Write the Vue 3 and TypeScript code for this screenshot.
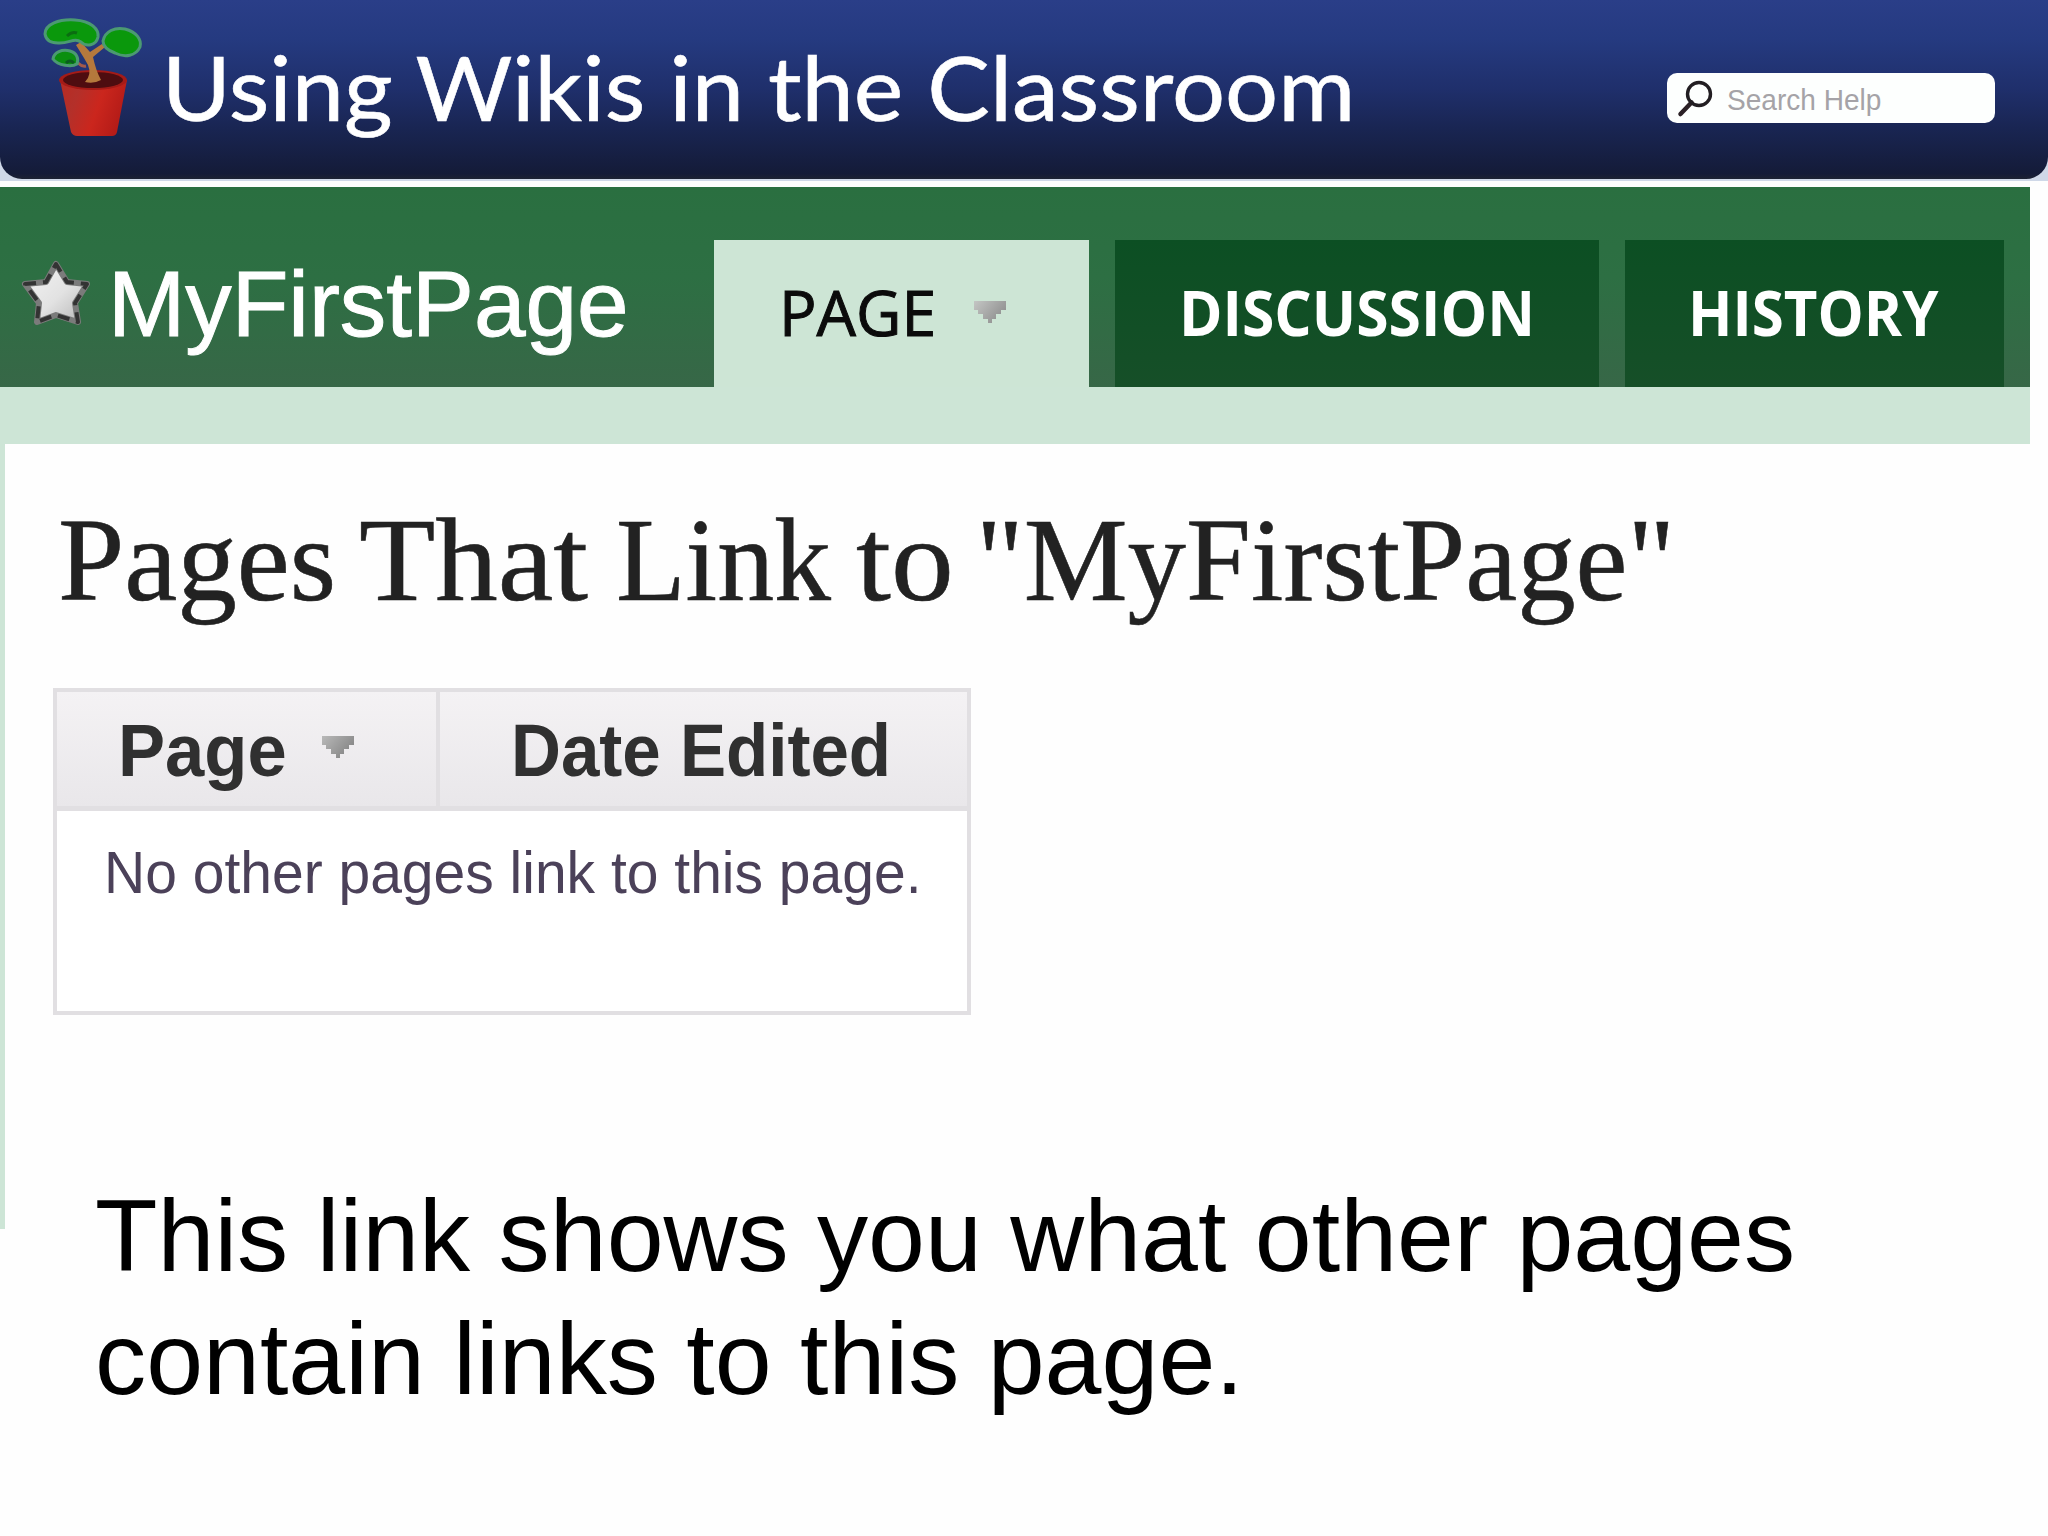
<script setup lang="ts">
import { ref } from "vue";

type Tab = {
  label: string;
  kind: string;
  hasMenu: boolean;
};

type TitleWord = {
  text: string;
  width: number;
  stretch: number;
};

const pageName = "MyFirstPage";
const activeTab = ref("PAGE");

const tabs: Tab[] = [
  { label: "PAGE", kind: "page", hasMenu: true },
  { label: "DISCUSSION", kind: "discussion", hasMenu: false },
  { label: "HISTORY", kind: "history", hasMenu: false },
];

const titleWords: TitleWord[] = [
  { text: "Pages", width: 301, stretch: 0.997 },
  { text: "That", width: 257, stretch: 1.045 },
  { text: "Link", width: 240, stretch: 0.952 },
  { text: "to", width: 120, stretch: 1.05 },
  { text: `"${pageName}"`, width: 700, stretch: 0.977 },
];

const captionLines = [
  "This link shows you what other pages",
  "contain links to this page.",
];
</script>

<template>
  <div class="slide">
    <div class="banner-wrap">
      <header class="banner">
        <svg class="plant" viewBox="0 0 110 130" aria-hidden="true">
          <defs>
            <linearGradient id="pot" x1="0" x2="1" y1="0" y2="0.3">
              <stop offset="0" stop-color="#b92a22" />
              <stop offset="0.3" stop-color="#b3302a" />
              <stop offset="0.65" stop-color="#cb261d" />
              <stop offset="1" stop-color="#b51c18" />
            </linearGradient>
          </defs>
          <path d="M19 71 L30 123 Q32 127 36 127 L71 127 Q75 127 76 123 L86 71 Z" fill="url(#pot)" />
          <ellipse cx="52" cy="71" rx="34" ry="10" fill="#a51b17" />
          <ellipse cx="52" cy="71" rx="30" ry="8" fill="#4e0d10" />
          <path d="M44 73 Q51 66 47 56 L43 49 L35 36 L40 33 L49 43 L61 35 L64 38 L52 48 Q55 62 60 71 Q53 75 44 73 Z" fill="#b5793c" />
          <path d="M45 57 Q41 58 37 54" fill="none" stroke="#a45a4a" stroke-width="3" />
          <path d="M4 25 C4 15 18 10 34 11 C50 12 58 20 57 28 C55 37 45 38 40 33 C33 28 28 35 17 34 C9 34 5 31 4 25 Z" fill="#0a980c" stroke="#4b9a72" stroke-width="3" />
          <path d="M62 32 C64 22 74 18 84 20 C95 23 101 30 99 38 C95 47 84 49 74 44 C66 41 62 37 62 32 Z" fill="#0a980c" stroke="#4b9a72" stroke-width="3" />
          <path d="M12 50 C13 43 21 40 29 42 C36 44 38 50 36 55 C31 58 17 57 12 50 Z" fill="#0a8f10" stroke="#4b9a72" stroke-width="3" />
          <path d="M26 27 Q31 22 36 24" fill="none" stroke="#0b6d12" stroke-width="3" />
          <path d="M25 54 Q29 50 33 54" fill="none" stroke="#0b5d20" stroke-width="3" />
        </svg>
        <h1 class="banner-title"><span>Using Wikis in the Classroom</span></h1>
        <div class="search">
          <svg class="search-icon" viewBox="0 0 38 40" aria-hidden="true">
            <path d="M15.500 23.500 L4.500 35" stroke="#2b2126" stroke-width="4.500" stroke-linecap="round" />
            <circle cx="23" cy="15" r="11.500" fill="none" stroke="#221e22" stroke-width="3.400" />
          </svg>
          <span class="search-text">Search Help</span>
        </div>
      </header>
    </div>

    <section class="wiki">
      <div class="wiki-bar">
        <svg class="star" viewBox="0 0 72 68" aria-hidden="true">
          <defs>
            <linearGradient id="star-fill" x1="0" x2="1" y1="0" y2="1">
              <stop offset="0" stop-color="#f4f4f4" />
              <stop offset="0.55" stop-color="#e2e2e2" />
              <stop offset="1" stop-color="#b5b5b5" />
            </linearGradient>
          </defs>
          <path
            d="M35 4 L46 22 L66 24 L54 43 L57 62 L35 55 L16 62 L18 43 L4 24 L25 22 Z"
            fill="url(#star-fill)"
            stroke="#7b7b7b"
            stroke-width="6"
            stroke-linejoin="round"
          />
          <path
            d="M35 4 L46 22 L66 24 L54 43 L57 62 L35 55 L16 62 L18 43 L4 24 L25 22 Z"
            fill="none"
            stroke="#333"
            stroke-width="4"
            stroke-dasharray="12 7"
            stroke-dashoffset="3"
            stroke-linejoin="round"
          />
        </svg>
        <h2 class="wiki-name"><span>{{ pageName }}</span></h2>
        <nav class="tabs">
          <a
            v-for="tab in tabs"
            :key="tab.label"
            class="tab"
            :class="[tab.kind, { active: tab.label === activeTab }]"
            v-on:click="activeTab = tab.label"
          >
            <span class="tab-label">{{ tab.label }}</span>
            <svg v-if="tab.hasMenu" class="arrow" viewBox="0 0 32 22" aria-hidden="true">
              <defs>
                <linearGradient id="tab-arrow" x1="0" x2="1" y1="0" y2="0.6">
                  <stop offset="0" stop-color="#c4c6c4" />
                  <stop offset="1" stop-color="#8f8f8f" />
                </linearGradient>
              </defs>
              <path d="M0 0H32V9H27V13H22V18H18V22H14V18H9V13H4V9H0Z" fill="url(#tab-arrow)" />
            </svg>
          </a>
        </nav>
      </div>
      <div class="wiki-strip"></div>

      <div class="content">
        <h3 class="content-title">
          <span
            v-for="word in titleWords"
            :key="word.text"
            :style="{ width: `${word.width}px`, transform: `scaleX(${word.stretch})` }"
            >{{ word.text }}</span
          >
        </h3>
        <div class="table">
          <div class="table-head">
            <div class="cell cell-page">
              <span class="cell-page-text">Page</span>
              <svg class="arrow" viewBox="0 0 32 22" aria-hidden="true">
                <defs>
                  <linearGradient id="head-arrow" x1="0" x2="1" y1="0" y2="0.6">
                    <stop offset="0" stop-color="#b9b9b9" />
                    <stop offset="1" stop-color="#858585" />
                  </linearGradient>
                </defs>
                <path d="M0 0H32V9H27V13H22V18H18V22H14V18H9V13H4V9H0Z" fill="url(#head-arrow)" />
              </svg>
            </div>
            <div class="cell cell-date"><span>Date Edited</span></div>
          </div>
          <div class="table-body"><span>No other pages link to this page.</span></div>
        </div>
      </div>
    </section>

    <p class="caption">
      <span v-for="line in captionLines" :key="line">{{ line }}</span>
    </p>
  </div>
</template>

<style>
body {
  margin: 0;
  background: #fefefe;
}
</style>

<style scoped>
.slide {
  width: 2048px;
  height: 1536px;
  overflow: hidden;
  background: #fefefe;
  font-family: "Liberation Sans", Arial, sans-serif;
}

h1,
h2,
h3,
p {
  margin: 0;
  font-weight: 400;
}

span {
  display: inline-block;
  transform-origin: 0 50%;
  white-space: nowrap;
}

.banner-wrap {
  height: 181px;
  margin-bottom: 6px;
  background: #cfd8e8;
}

.banner {
  display: flex;
  box-sizing: border-box;
  height: 179px;
  padding-left: 41px;
  border-radius: 0 0 22px 22px;
  background: linear-gradient(#2a3e88 0%, #253a80 22%, #1f2f6b 50%, #192552 72%, #141b38 97%, #1c2233 100%);
}

.plant {
  width: 110px;
  height: 130px;
  margin-top: 9px;
}

.banner-title {
  width: 1516px;
  padding: 36px 0 0 11px;
  box-sizing: border-box;
  color: #fff;
  font-family: Lato, "Open Sans", sans-serif;
  font-size: 90px;
  line-height: 101px;
  -webkit-text-stroke: 0.6px #fff;
}

.banner-title span {
  transform: scaleX(1.041);
}

.search {
  display: flex;
  box-sizing: border-box;
  width: 328px;
  height: 50px;
  margin-top: 73px;
  padding-left: 9px;
  border-radius: 10px;
  background: #fdfffe;
}

.search-icon {
  flex: none;
  width: 38px;
  height: 40px;
  margin-top: 6px;
}

.search-text {
  margin-left: 13px;
  color: #a5a3a7;
  font-size: 30px;
  line-height: 54px;
  transform: scaleX(0.935);
}

.wiki {
  width: 2030px;
}

.wiki-bar {
  display: flex;
  height: 200px;
  background: linear-gradient(#2a6f40 0%, #2d6f43 45%, #376747 100%);
}

.star {
  flex: none;
  width: 72px;
  height: 68px;
  margin: 73px 0 0 21px;
}

.wiki-name {
  box-sizing: border-box;
  width: 621px;
  padding: 57px 0 0 15px;
  color: #fff;
  font-size: 92.500px;
  line-height: 120px;
  -webkit-text-stroke: 1px #fff;
}

.wiki-name span {
  transform: scaleX(1.003);
}

.tabs {
  display: flex;
  gap: 26px;
  padding-top: 53px;
}

.tab {
  display: flex;
  box-sizing: border-box;
  height: 147px;
  background: linear-gradient(#0c4f23, #164f28);
  color: #fff;
  cursor: pointer;
  font-family: "Open Sans", sans-serif;
  font-size: 62px;
  font-weight: 700;
  line-height: 144px;
}

.tab.page {
  width: 375px;
  padding-left: 65px;
}

.tab.discussion {
  width: 484px;
  padding-left: 64px;
}

.tab.history {
  width: 379px;
  padding-left: 63px;
}

.tab.discussion .tab-label {
  transform: scaleX(0.948);
}

.tab.history .tab-label {
  transform: scaleX(0.938);
}

.tab.active {
  background: #cde5d5;
  color: #0b0b0b;
  font-weight: 400;
}

.tab.page .tab-label {
  width: 195px;
  transform: scaleX(1.008);
  -webkit-text-stroke: 1px #0b0b0b;
}

.arrow {
  flex: none;
  width: 32px;
  height: 22px;
}

.tab .arrow {
  margin-top: 61px;
}

.wiki-strip {
  height: 57px;
  background: #cde5d6;
}

.content {
  box-sizing: border-box;
  height: 785px;
  padding: 56px 0 0 53px;
  border-left: 5px solid #cde5d6;
}

.content-title {
  display: flex;
  height: 121px;
  color: #222;
  font-family: "Liberation Serif", Georgia, serif;
  font-size: 119.600px;
  line-height: 120px;
  -webkit-text-stroke: 0.6px #222;
}

.table {
  box-sizing: border-box;
  width: 918px;
  height: 327px;
  margin: 67px 0 0 -5px;
  border: 4px solid #e1dfe2;
  background: #fff;
}

.table-head {
  display: flex;
  height: 114px;
  border-bottom: 5px solid #e1dfe2;
  background: linear-gradient(#f4f2f4, #e9e7ea);
  color: #303030;
  font-size: 73.500px;
  font-weight: 700;
  line-height: 118px;
}

.cell {
  display: flex;
  box-sizing: border-box;
}

.cell-page {
  width: 383px;
  padding-left: 61px;
  border-right: 4px solid #e1dfe2;
}

.cell-page-text {
  width: 204px;
  transform: scaleX(0.96);
}

.cell-page .arrow {
  margin-top: 44px;
}

.cell-date {
  padding-left: 71px;
}

.cell-date span {
  transform: scaleX(0.94);
}

.table-body {
  padding-left: 47px;
  color: #4b4159;
  font-size: 60px;
  line-height: 124px;
}

.table-body span {
  transform: scaleX(0.95);
}

/* The caption starts a little above the end of the left rail. */
.caption {
  display: flex;
  flex-direction: column;
  align-items: flex-start;
  margin-top: -55px;
  padding-left: 95px;
  color: #000;
  font-size: 102.300px;
  line-height: 123px;
}
</style>
